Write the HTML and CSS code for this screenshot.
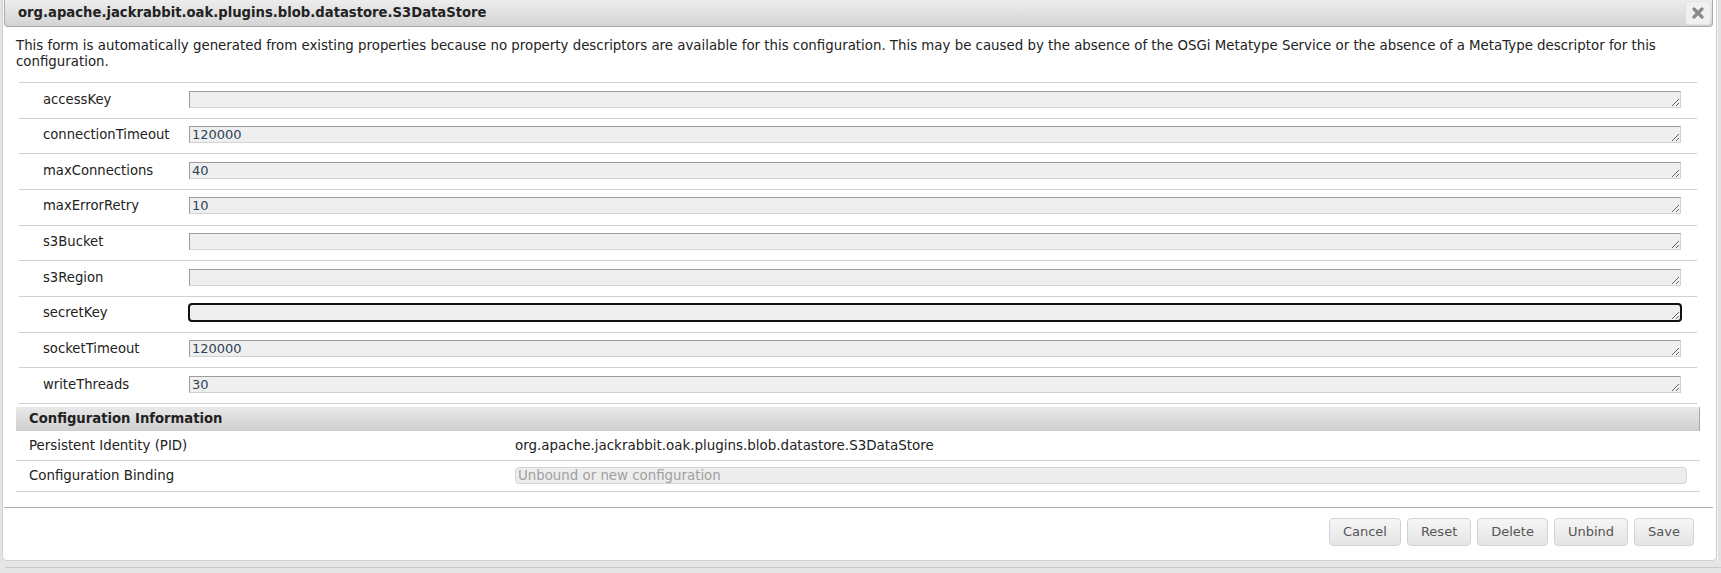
FILE: index.html
```html
<!DOCTYPE html>
<html>
<head>
<meta charset="utf-8">
<link rel="stylesheet" href="styles.css">
</head>
<body>
<div class="screen">
  <div class="dialog">
    <div class="titlebar">
      <span class="title">org.apache.jackrabbit.oak.plugins.blob.datastore.S3DataStore</span>
      <button class="close" type="button" aria-label="close">
        <svg width="12" height="12" viewBox="0 0 12 12"><path d="M2 2 L10 10 M10 2 L2 10" stroke="#8a8a8a" stroke-width="3.2" stroke-linecap="round" fill="none"/></svg>
      </button>
    </div>
    <div class="content">
      <p class="desc">This form is automatically generated from existing properties because no property descriptors are available for this configuration. This may be caused by the absence of the OSGi Metatype Service or the absence of a MetaType descriptor for this configuration.</p>
      <div class="props">
        <div class="prop-row"><label class="prop-label">accessKey</label><textarea class="prop-input" rows="1"></textarea></div>
        <div class="prop-row"><label class="prop-label">connectionTimeout</label><textarea class="prop-input" rows="1">120000</textarea></div>
        <div class="prop-row"><label class="prop-label">maxConnections</label><textarea class="prop-input" rows="1">40</textarea></div>
        <div class="prop-row"><label class="prop-label">maxErrorRetry</label><textarea class="prop-input" rows="1">10</textarea></div>
        <div class="prop-row"><label class="prop-label">s3Bucket</label><textarea class="prop-input" rows="1"></textarea></div>
        <div class="prop-row"><label class="prop-label">s3Region</label><textarea class="prop-input" rows="1"></textarea></div>
        <div class="prop-row"><label class="prop-label">secretKey</label><textarea class="prop-input focused" rows="1"></textarea></div>
        <div class="prop-row"><label class="prop-label">socketTimeout</label><textarea class="prop-input" rows="1">120000</textarea></div>
        <div class="prop-row"><label class="prop-label">writeThreads</label><textarea class="prop-input" rows="1">30</textarea></div>
      </div>
      <div class="cfg-head">Configuration Information</div>
      <div class="cfg-row cfg-pid"><span class="cfg-label">Persistent Identity (PID)</span><span class="cfg-value">org.apache.jackrabbit.oak.plugins.blob.datastore.S3DataStore</span></div>
      <div class="cfg-row cfg-bind"><span class="cfg-label">Configuration Binding</span><select class="cfg-select" disabled><option>Unbound or new configuration</option></select></div>
    </div>
    <div class="buttonpane">
      <button class="btn" type="button">Cancel</button>
      <button class="btn" type="button">Reset</button>
      <button class="btn" type="button">Delete</button>
      <button class="btn" type="button">Unbind</button>
      <button class="btn" type="button">Save</button>
    </div>
  </div>
  <div class="rightbar"></div>
</div>
<div class="bottom"></div>
</body>
</html>
```
FILE: styles.css
```css
html, body {
  margin: 0;
  padding: 0;
}
body {
  background: #e4e4e4;
  font-family: "DejaVu Sans", Verdana, sans-serif;
  font-size: 13.35px;
  color: #222;
  width: 1721px;
  height: 573px;
  overflow: hidden;
}
.screen {
  display: flex;
  height: 561px;
}
.dialog {
  box-sizing: border-box;
  margin-left: 2px;
  width: 1715px;
  height: 561px;
  background: #fff;
  border: 1px solid #cfcfcf;
  border-top: none;
  border-radius: 0 0 5px 5px;
  padding: 0 3px 0 1px;
  display: flex;
  flex-direction: column;
}
.rightbar {
  flex: 1;
  background: #e2e2e2;
  border-left: 1px solid #f4f4f4;
}
.titlebar {
  box-sizing: border-box;
  height: 27px;
  border: 1px solid #aaa;
  border-top: none;
  border-radius: 0 0 4px 4px;
  background: linear-gradient(to bottom, #ededed, #d4d4d4);
  display: flex;
  align-items: center;
  justify-content: space-between;
  padding: 0 1px 0 13px;
}
.title {
  font-weight: bold;
  font-size: 13.2px;
  color: #222;
  line-height: 26px;
}
.close {
  box-sizing: border-box;
  width: 26px;
  height: 24px;
  margin-top: 0;
  padding: 0;
  border: 1px solid #e2e2e2;
  border-radius: 3px;
  background: #f0f0f0;
  display: flex;
  align-items: center;
  justify-content: center;
}
.content {
  padding: 11px 13px 0 12px;
}
.desc {
  margin: 0 0 12px 0;
  line-height: 16px;
  color: #222;
}
.props {
  margin: 0 3px;
  border-top: 1px solid #d0d0d0;
}
.prop-row {
  box-sizing: border-box;
  height: 35.67px;
  border-bottom: 1px solid #d0d0d0;
  display: flex;
  align-items: flex-start;
  padding: 7.5px 16px 0 0;
}
.prop-label {
  box-sizing: border-box;
  width: 170px;
  padding-left: 24px;
  line-height: 17px;
  font-size: 13.2px;
  color: #222;
}
.prop-input {
  flex: 1;
  box-sizing: border-box;
  height: 17px;
  margin: 0;
  padding: 0 2px;
  font-family: "DejaVu Sans", Verdana, sans-serif;
  font-size: 13px;
  line-height: 15px;
  color: #2e4256;
  background: #efefef;
  border: 1px solid;
  border-color: #9c9c9c #d2d2d2 #d2d2d2 #9c9c9c;
  resize: vertical;
  overflow: hidden;
}
.prop-input.focused {
  outline: 2px solid #111;
  outline-offset: -1px;
  border-radius: 3px;
}
.cfg-head {
  margin-top: 3px;
  box-sizing: border-box;
  height: 24px;
  line-height: 24px;
  padding-left: 13px;
  font-weight: bold;
  font-size: 13.2px;
  color: #222;
  background: linear-gradient(to bottom, #e9e9e9, #cfcfcf);
  border-right: 1px solid #a8a8a8;
}
.cfg-row {
  box-sizing: border-box;
  display: flex;
  align-items: center;
  border-bottom: 1px solid #d0d0d0;
}
.cfg-pid {
  height: 30px;
}
.cfg-bind {
  height: 31px;
}
.cfg-label {
  box-sizing: border-box;
  width: 499px;
  padding-left: 13px;
  color: #222;
}
.cfg-value {
  color: #222;
  font-size: 13.45px;
}
.cfg-select {
  flex: 1;
  margin-right: 13px;
  box-sizing: border-box;
  height: 17px;
  padding: 0 2px;
  -webkit-appearance: none;
  appearance: none;
  font-family: "DejaVu Sans", Verdana, sans-serif;
  font-size: 13.35px;
  line-height: 15px;
  color: #a0a0a0;
  background: #ededed;
  border: 1px solid #d4d4d4;
  border-radius: 4px;
  opacity: 1;
}
.buttonpane {
  margin-top: 15px;
  border-top: 1px solid #b0b0b0;
  display: flex;
  justify-content: flex-end;
  gap: 6px;
  padding: 10px 19px 0 0;
}
.btn {
  box-sizing: border-box;
  height: 28px;
  padding: 0 13px;
  font-family: "DejaVu Sans", Verdana, sans-serif;
  font-size: 13px;
  color: #555;
  background: linear-gradient(to bottom, #f6f6f6, #e4e4e4);
  border: 1px solid #d3d3d3;
  border-radius: 4px;
}
.bottom {
  height: 12px;
  background: #e6e6e6;
}
.bottom::after {
  content: "";
  display: block;
  height: 6px;
  margin-left: 5px;
  border-bottom: 1px solid #c8c8c8;
}
```
